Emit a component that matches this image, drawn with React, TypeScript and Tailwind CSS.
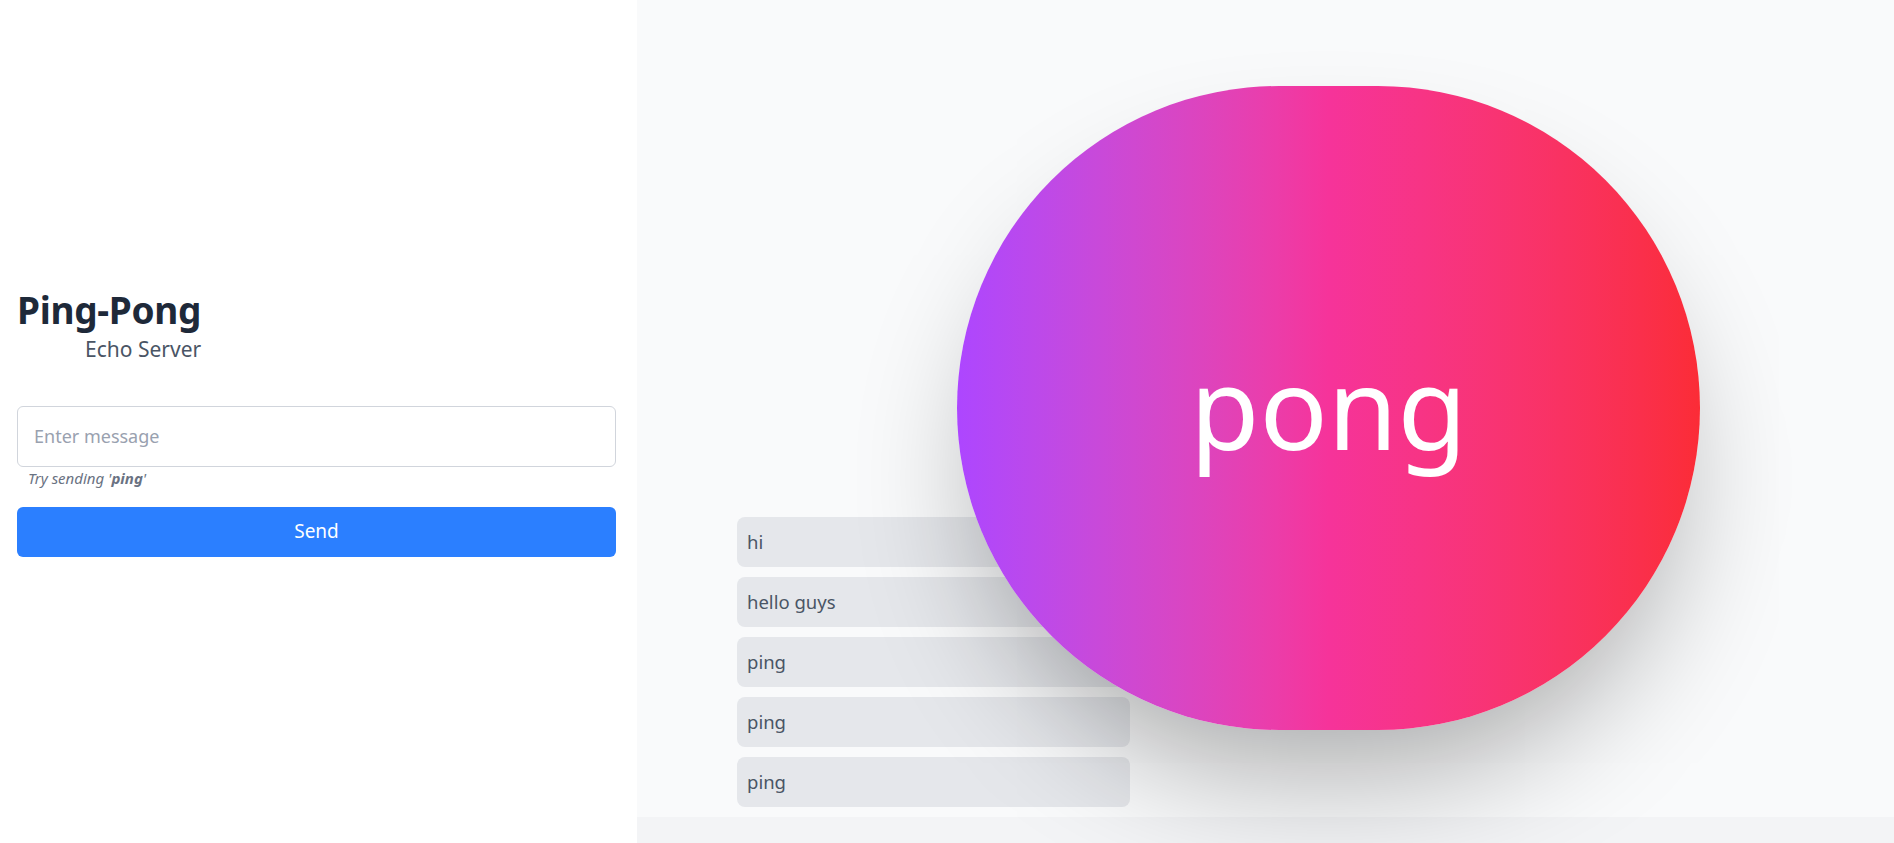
import React from "react";

const messages = ["hi", "hello guys", "ping", "ping", "ping"];

export default function App() {
  return (
    <div className="flex h-[843px] w-full overflow-hidden font-['Noto_Sans',sans-serif]">
      <div className="flex h-full w-[637px] shrink-0 flex-col justify-center bg-white pl-[17px] pr-[21px]">
        <div className="flex flex-col items-end self-start">
          <h1 className="text-[37px] font-bold leading-[45px] tracking-[-0.3px] text-[#1e2939]">Ping-Pong</h1>
          <p className="mt-[3px] text-[21px] leading-[28px] text-[#4a5565]">Echo Server</p>
        </div>
        <input
          className="mt-[43px] h-[61px] w-full rounded-md border border-[#d1d5dc] px-4 text-[18px] text-gray-700 outline-none placeholder:text-[#99a1af]"
          placeholder="Enter message"
        />
        <p className="pl-[11px] text-[15px] italic leading-[22px] text-[#6a7282]">
          Try sending '<span className="font-bold">ping</span>'
        </p>
        <button className="mt-[18px] h-[50px] w-full rounded-md bg-[#2b7fff] text-[19px] text-white">Send</button>
      </div>
      <div className="relative flex flex-1 flex-col">
        <div className="flex h-[817px] flex-col justify-end bg-[#f9fafb] pb-[10px] pl-[100px]">
          <div className="flex w-[393px] flex-col gap-[10px]">
            {messages.map((m, i) => (
              <div key={i} className="flex h-[50px] items-center rounded-lg bg-[#e5e7eb] px-[10px] text-[18.5px] text-[#4a5565]">
                {m}
              </div>
            ))}
          </div>
        </div>
        <div className="h-[26px] bg-[#f3f4f6]" />
        <div className="absolute left-[320px] top-[86px] flex h-[644px] w-[743px] items-center justify-center rounded-full bg-linear-to-r from-[#ad46ff] via-[#f6339a] to-[#fb2c36] text-[113px] leading-none text-white shadow-[0_70px_130px_-30px_rgba(0,0,0,0.33)]">
          <span className="-mt-[4px]">pong</span>
        </div>
      </div>
    </div>
  );
}
